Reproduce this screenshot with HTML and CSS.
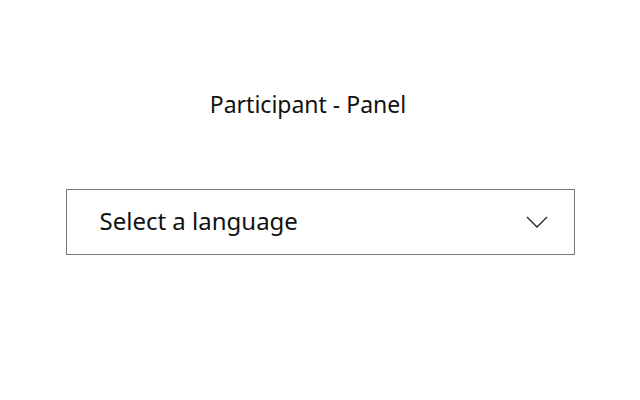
FILE: index.html
```html
<!DOCTYPE html>
<html lang="en">
<head>
    <meta charset="UTF-8">
    <meta name="viewport" content="width=device-width, initial-scale=1.0">
    <title>Participant - Panel</title>
    <link rel="stylesheet" href="styles.css">
</head>
<body>
    <div class="panel">
        <h1 class="panel-title">Participant - Panel</h1>

        <div class="language-select">
            <span class="language-label">Select a language</span>
            <svg class="chevron" width="22" height="12" viewBox="0 0 22 12">
                <polyline points="1,1 11,11 21,1" fill="none" stroke="#222" stroke-width="1.3" />
            </svg>
        </div>
    </div>
</body>
</html>
```

FILE: styles.css
```css
body {
    font-family: "Noto Sans", sans-serif;
    background-color: #fff;
    color: #111;
    margin: 0;
    padding: 0;
}

.panel {
    width: 509px;
    margin: 0 auto;
    padding-top: 86px;
}

.panel-title {
    font-size: 23px;
    font-weight: normal;
    line-height: 36px;
    margin: 0 24px 0 0;
    text-align: center;
}

.language-select {
    margin-top: 67px;
    box-sizing: border-box;
    height: 66px;
    border: 1px solid #777;
    display: flex;
    align-items: center;
    justify-content: space-between;
    padding: 0 26px 3px 33px;
}

.language-label {
    font-size: 24px;
}

.chevron {
    display: block;
    margin-top: 3px;
}
```
